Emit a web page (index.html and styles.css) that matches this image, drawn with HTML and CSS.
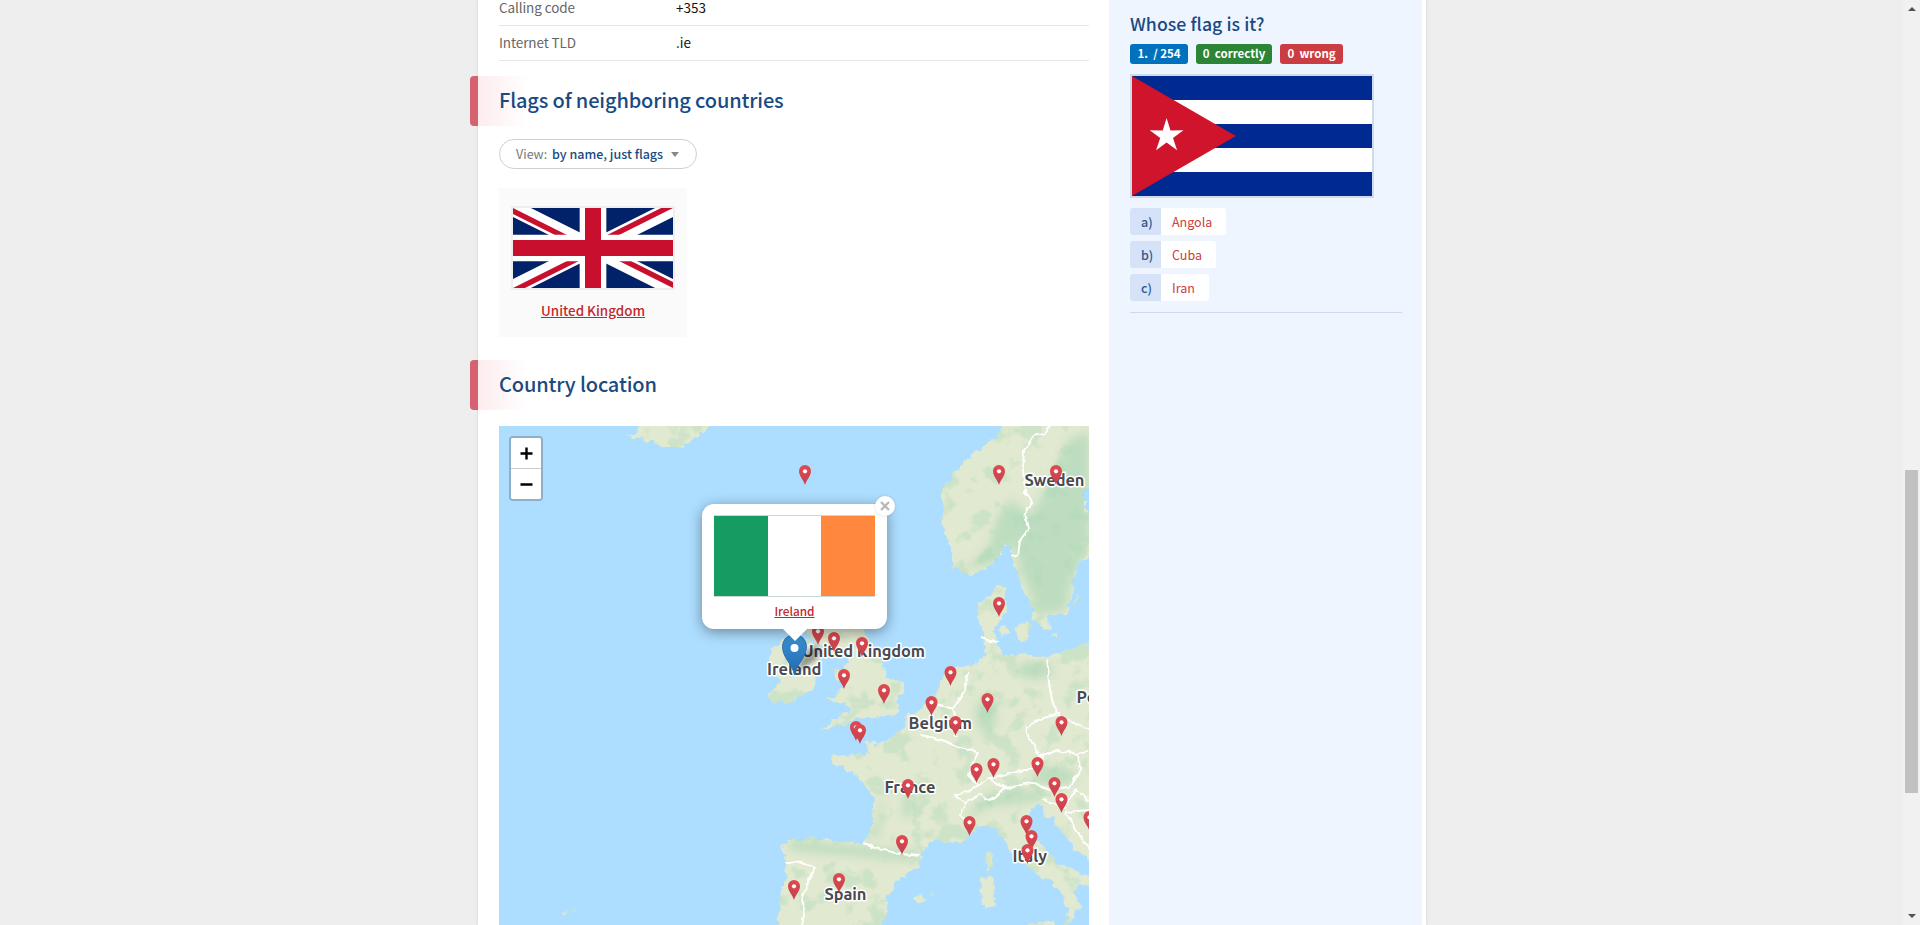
FILE: index.html
```html
<!DOCTYPE html>
<html lang="en">
<head>
<meta charset="utf-8">
<title>Flag of Ireland</title>
<link rel="stylesheet" href="styles.css">
</head>
<body>
<div class="page">
  <div class="content">
    <main class="main">
      <dl class="facts">
        <div class="fact"><dt>Calling code</dt><dd>+353</dd></div>
        <div class="fact"><dt>Internet TLD</dt><dd>.ie</dd></div>
      </dl>
      <h2 class="section-title first">Flags of neighboring countries</h2>
      <button class="view"><span class="view-label">View:</span><span class="view-value">by name, just flags</span><i class="caret"></i></button>
      <a class="flag-card" href="#">
        <svg class="uk" viewBox="0 0 60 30" width="160" height="80">
          <clipPath id="q"><path d="M30 15h30v15zv15H0zH0V0zV0h30z"/></clipPath>
          <path fill="#012169" d="M0 0h60v30H0z"/>
          <path d="M0 0l60 30M60 0L0 30" stroke="#fff" stroke-width="6"/>
          <path d="M0 0l60 30M60 0L0 30" clip-path="url(#q)" stroke="#c8102e" stroke-width="4"/>
          <path d="M30 0v30M0 15h60" stroke="#fff" stroke-width="10"/>
          <path d="M30 0v30M0 15h60" stroke="#c8102e" stroke-width="6"/>
        </svg>
        <span class="flag-name">United Kingdom</span>
      </a>
      <h2 class="section-title second">Country location</h2>
      <div class="map">
        <svg class="map-canvas" viewBox="499 426 590 499" width="590" height="499">
          <defs>
            <filter id="coast" x="0" y="0" width="1" height="1" color-interpolation-filters="sRGB">
              <feTurbulence type="fractalNoise" baseFrequency=".13" numOctaves="3" seed="4" result="n"/>
              <feDisplacementMap in="SourceGraphic" in2="n" scale="9" xChannelSelector="R" yChannelSelector="G" result="land"/>
              <feTurbulence type="fractalNoise" baseFrequency=".045" numOctaves="5" seed="11"/>
              <feColorMatrix values="0 0 0 0 .72  0 0 0 0 .865  0 0 0 0 .74  7 0 0 0 -3.75"/>
              <feComposite in2="land" operator="in" result="woods"/>
              <feComponentTransfer in="woods" result="softwoods"><feFuncA type="linear" slope=".5"/></feComponentTransfer>
              <feMerge><feMergeNode in="land"/><feMergeNode in="softwoods"/></feMerge>
            </filter>
            <filter id="rough" x="-.1" y="-.1" width="1.2" height="1.2" color-interpolation-filters="sRGB">
              <feTurbulence type="fractalNoise" baseFrequency=".12" numOctaves="2" seed="8"/>
              <feDisplacementMap in="SourceGraphic" scale="6" xChannelSelector="R" yChannelSelector="G"/>
            </filter>
            <filter id="soft" x="-.3" y="-.3" width="1.6" height="1.6"><feGaussianBlur stdDeviation="4"/></filter>
            <filter id="shade" x="-.3" y="-.3" width="1.6" height="1.6"><feGaussianBlur stdDeviation="2"/></filter>
            <linearGradient id="red" x2="0" y2="1"><stop stop-color="#e04a50"/><stop offset="1" stop-color="#c5404c"/></linearGradient>
            <linearGradient id="blue" x2="0" y2="1"><stop stop-color="#3c92d0"/><stop offset="1" stop-color="#2069b4"/></linearGradient>
            <g id="pin"><path d="M0 20C-1.200 15-6 11.500-6 6a6 6 0 0 1 12 0C6 11.500 1.200 15 0 20Z" fill="url(#red)"/><circle cy="6.300" r="2.100" fill="#fff"/></g>
            <clipPath id="landclip"><use href="#north"/><use href="#mainland"/></clipPath>
          </defs>
          <path fill="#addeff" d="M499 426h590v499H499z"/>
          <g filter="url(#coast)" fill="#e1e9d0">
            <path fill="none" d="M499 426h590v499H499z"/>
            <path d="M626 436L637 432 638 420H714L698 437 692 440 682 447 672 449 662 447 650 441 640 438Z"/>
            <path id="north" d="M1003 420L1002 428 992 441 977 450 965 463 953 475 942 487 943 500 942 515 945 533 950 552 953 567 967 575 983 572 997 560 1004 545 1010 545 1012 560 1020 580 1030 603 1035 620 1042 630 1050 629 1047 615 1067 613 1072 593 1077 563 1099 550V518L1084 511 1084 492 1099 480V420Z"/>
            <path id="mainland" d="M978 602L990 597 997 585 1005 587 1003 600 1008 610 1000 620 993 633 999 647 1007 657 1024 653 1034 660 1051 655 1068 650 1099 640V865L1089 859 1074 847 1061 831 1052 817 1045 817 1041 804 1029 810 1027 827 1041 844 1053 859 1066 867 1099 880V892L1078 884 1074 891 1081 905 1074 911 1070 926H1063L1069 912 1066 899 1051 882 1031 870 1012 854 1004 837 992 825 979 827 962 843 947 842 931 841 922 851 918 867 897 881 885 902 887 911 879 935H778L779 907 785 881 786 861 782 847 790 839 814 838 840 842 862 843 869 837 872 817 874 797 864 784 850 772 835 765 832 757 854 754 869 754 864 740 873 740 876 746 888 739 905 727 904 715 917 712 927 704 937 694 944 673 957 667 974 663 986 657 984 637 979 620Z"/>
            <path d="M801 625H862L866 634 874 650 884 668 888 679 904 682 904 693 894 702 899 708 896 715 874 717 853 719 840 726 822 730 837 719 851 710 844 704 826 699 844 688 833 672 850 664 846 652 829 653 818 643 806 634Z"/>
            <path d="M772 651L782 641 800 636 820 645 822 658 816 672 815 687 792 702 773 702 768 694 782 679 768 672Z"/>
            <path d="M985 855L992 852 993 867 987 871ZM982 879L994 876 996 904 986 910 980 892ZM914 899L922 895 925 900 919 904ZM1026 924L1055 920V930H1030ZM998 630L1006 625 1010 633 1002 636ZM1014 628L1028 621 1029 635 1021 641ZM1073 608L1078 593 1079 598ZM1052 634L1057 633 1056 637ZM930 893L935 894 933 896ZM560 914L567 911 565 914ZM571 911L577 910 575 912Z"/>
          </g>
          <g clip-path="url(#landclip)" fill="#a9d6b6" opacity=".62"><g filter="url(#soft)">
            <path d="M1089 432L1068 440 1060 462 1040 500 1030 515 1010 500 996 520 990 545 966 570 1000 560 1012 542 1022 575 1040 615 1066 610 1075 560 1089 545Z"/>
            <ellipse cx="1054" cy="776" rx="22" ry="9"/><ellipse cx="986" cy="715" rx="10" ry="18"/><ellipse cx="1035" cy="670" rx="18" ry="9"/><path d="M965 820L985 795 1040 790 1045 800 990 806ZM872 835L885 790 878 840ZM790 840L920 852 925 862 790 850Z"/>
            <ellipse cx="908" cy="805" rx="5" ry="14"/>
          </g></g>
          <g class="borders" filter="url(#rough)">
            <path d="M1049 426L1045 434 1033 436 1024 450 1023 470 1025 492 1032 502 1025 513 1028 530 1020 540 1018 556 1011 554M982 638L990 641 999 642M968 671L965 690 953 709 958 726 955 736M936 704L954 709M922 735L945 741 957 746 978 752 973 764 968 775 978 785 963 793 955 796M978 785L990 778 1010 773 1040 768 1042 756 1029 738 1025 727 1040 720 1056 714 1050 690 1046 659M1056 714L1080 726 1089 730M1042 756L1058 750 1078 755 1089 750M990 778L1005 788 1030 782 1050 790 1070 788 1080 770 1078 755M955 796L965 803 980 795 990 800 1005 788M965 803L960 815 970 822M1042 800L1065 808 1075 790 1089 800M1065 812L1089 810M1065 812L1089 850M864 843L880 849 900 854 921 856M786 862L805 863 814 868 807 884 802 900 805 910 802 925"/>
          </g>
          <g class="labels">
            <text x="1024.500" y="486" textLength="60">Sweden</text><text x="802" y="657" textLength="123">United Kingdom</text>
            <text x="767" y="675" textLength="54.500">Ireland</text><text x="908.500" y="728.500" textLength="63.500">Belgium</text>
            <text x="884.500" y="793" textLength="51">France</text><text x="1012.500" y="861.500" textLength="34.500">Italy</text>
            <text x="824.500" y="900" textLength="42">Spain</text><text x="1076.500" y="702.500">Po</text>
          </g>
          <use href="#pin" x="805" y="465"/><use href="#pin" x="999" y="465"/><use href="#pin" x="1056" y="465"/><use href="#pin" x="999" y="597"/>
          <use href="#pin" x="818" y="625"/><use href="#pin" x="834" y="632"/><use href="#pin" x="862" y="637"/><use href="#pin" x="844" y="669"/>
          <use href="#pin" x="884" y="684"/><use href="#pin" x="856" y="721"/><use href="#pin" x="860" y="724"/><use href="#pin" x="931.500" y="696"/>
          <use href="#pin" x="950.500" y="666"/><use href="#pin" x="955.500" y="716"/><use href="#pin" x="987.500" y="693"/><use href="#pin" x="1061.500" y="716"/>
          <use href="#pin" x="976.500" y="763"/><use href="#pin" x="993.500" y="758"/><use href="#pin" x="1037.500" y="757"/><use href="#pin" x="1054.500" y="777"/>
          <use href="#pin" x="1061.500" y="793"/><use href="#pin" x="908" y="779"/><use href="#pin" x="969.500" y="816"/><use href="#pin" x="1026.500" y="815"/>
          <use href="#pin" x="1031.500" y="830"/><use href="#pin" x="1027.500" y="844"/><use href="#pin" x="1089.500" y="811"/><use href="#pin" x="902" y="835"/>
          <use href="#pin" x="839" y="873"/><use href="#pin" x="794" y="880"/>
          <path d="M795 674L805 654Q814 642 820 648 823 656 812 662Z" fill="#000" opacity=".35" filter="url(#shade)"/>
          <path d="M794.500 675C793 665 782.500 658 782.500 646.500a12 12 0 0 1 24 0C806.500 658 796 665 794.500 675Z" fill="url(#blue)" stroke="#2a71ad" stroke-width="1"/>
          <circle cx="794.500" cy="648" r="4" fill="#fff"/>
        </svg>
        <div class="zoom-control"><button class="zoom"><svg width="13" height="13"><path d="M6.500 .5v12M.5 6.500h12" stroke="#000" stroke-width="2.400"/></svg></button><button class="zoom"><svg width="13" height="13"><path d="M.5 6.500h12" stroke="#000" stroke-width="2.400"/></svg></button></div>
        <div class="popup">
          <div class="ireland"><i class="green"></i><i class="white"></i><i class="orange"></i></div>
          <a class="popup-link" href="#">Ireland</a>
          <svg class="tip" width="28" height="14"><path d="M1 0h26L14 13z" fill="#fff"/></svg>
          <button class="close"><svg width="10" height="10"><path d="M1 1l8 8M9 1L1 9" stroke="#b8b8b8" stroke-width="2.300"/></svg></button>
        </div>
      </div>
    </main>
    <aside class="side">
      <h3 class="quiz-title">Whose flag is it?</h3>
      <div class="badges"><span class="badge total">1.&nbsp; / 254</span><span class="badge ok">0&nbsp; correctly</span><span class="badge bad">0&nbsp; wrong</span></div>
      <svg class="cuba" viewBox="0 0 240 120" width="240" height="120">
        <path fill="#fff" d="M0 0h240v120H0z"/><path fill="#002a8f" d="M0 0h240v24H0zM0 48h240v24H0zM0 96h240v24H0z"/>
        <path fill="#cf142b" d="M0 0l103.900 60L0 120z"/>
        <path fill="#fff" d="M34.600 42L38.500 54.400 51.500 54.300 41 61.900 45.100 74.300 34.600 66.600 24.100 74.300 28.200 61.900 17.700 54.300 30.700 54.400Z"/>
      </svg>
      <div class="answers">
        <a class="answer" href="#"><b class="key">a)</b><span class="word">Angola</span></a>
        <a class="answer" href="#"><b class="key">b)</b><span class="word">Cuba</span></a>
        <a class="answer" href="#"><b class="key">c)</b><span class="word">Iran</span></a>
      </div>
    </aside>
  </div>
  <div class="scrollbar"><i class="up"></i><i class="thumb"></i><i class="down"></i></div>
</div>
</body>
</html>
```
FILE: styles.css
```css
* { box-sizing: border-box; }
body { margin: 0; overflow: hidden; background: #eee; font-family: "Source Sans Pro", "Noto Sans CJK SC", sans-serif; font-size: 13.5px; color: #111; }
button { font: inherit; padding: 0; margin: 0; border: 0; background: #fff; color: inherit; }
h2, h3, dl, dd { margin: 0; }
svg { display: block; }
.page { display: flex; justify-content: space-between; height: 925px; padding-left: 478px; }
.content { display: flex; width: 948px; height: 925px; background: #fff; box-shadow: 0 0 3px rgba(0,0,0,.13); }
.main { width: 631px; flex: none; padding-left: 21px; display: flex; flex-direction: column; align-items: flex-start; }
.facts { width: 590px; margin-top: -9px; }
.fact { display: flex; height: 35px; line-height: 32px; border-bottom: 1px solid #e8e8e8; }
.fact dt { width: 177px; color: #666; letter-spacing: -.1px; }
.fact dd { color: #111; }
.section-title { height: 50px; width: 611px; margin-left: -29px; padding-left: 21px; line-height: 48px; font-size: 20px; letter-spacing: -.14px; font-weight: 500; color: #1b4a82; border-left: 8px solid #d66170; border-radius: 4px 0 0 4px; background: linear-gradient(90deg, #fdecee, #fff 50px); }
.first { margin-top: 15px; }
.second { margin-top: 23px; }
.view { display: flex; align-items: center; width: 198px; height: 30px; margin-top: 13px; padding-left: 16px; border: 1px solid #d0d0d0; border-radius: 15px; font-size: 12.500px; line-height: 28px; white-space: nowrap; }
.view-label { width: 36px; text-align: left; color: #777; }
.view-value { color: #1b4a82; font-weight: 500; }
.caret { margin-left: 8px; border: 4px solid transparent; border-top: 5px solid #888; border-bottom: 0; }
.flag-card { display: flex; flex-direction: column; align-items: center; width: 188px; height: 149px; margin-top: 19px; padding-top: 18px; background: #fafafa; text-decoration: none; }
.uk { box-sizing: content-box; border: 2px solid #eee; }
.flag-name { margin-top: 10px; line-height: 20px; font-size: 13.400px; font-weight: 500; color: #c3282d; text-decoration: underline; }
.map { position: relative; width: 590px; height: 499px; margin-top: 16px; overflow: hidden; }
.borders { fill: none; stroke: #fff; stroke-width: 1.900; stroke-linejoin: round; }
.labels { font: bold 16.500px Ubuntu, "Noto Sans", sans-serif; fill: #4a4a4f; stroke: #fff; stroke-width: 3px; stroke-linejoin: round; paint-order: stroke; }
.zoom-control { position: absolute; left: 10px; top: 10px; width: 34px; height: 65px; border: 2px solid #8fafc8; border-radius: 4px; background: #fff; overflow: hidden; }
.zoom { display: flex; align-items: center; justify-content: center; width: 30px; height: 31px; border-bottom: 1px solid #ccc; }
.zoom + .zoom { height: 30px; border: 0; }
.popup { position: absolute; left: 203px; top: 78px; width: 185px; height: 125px; padding: 11px 12px; border-radius: 12px; background: #fff; box-shadow: 0 3px 14px rgba(0,0,0,.4); text-align: center; }
.ireland { display: flex; width: 161px; height: 82px; border: 1px solid #ccdad8; border-width: 1px 0; }
.ireland i { flex: 1; }
.green { background: #169b62; }
.orange { background: #ff883e; }
.popup-link { display: block; margin-top: 4px; line-height: 20px; font-size: 11.800px; font-weight: 500; color: #c3282d; text-decoration: underline; }
.tip { position: absolute; left: 79px; top: 124px; }
.close { position: absolute; right: -8px; top: -8px; width: 20px; height: 20px; border-radius: 50%; display: flex; align-items: center; justify-content: center; box-shadow: 0 0 3px rgba(0,0,0,.15); }
.side { width: 313px; height: 925px; padding: 10px 20px 0 21px; background: #eff5ff; }
.quiz-title { height: 26px; line-height: 26px; font-size: 17.700px; letter-spacing: .05px; font-weight: 500; color: #1b4a82; }
.badges { display: flex; gap: 8px; margin-top: 8px; }
.badge { height: 20px; line-height: 19px; border-radius: 3px; font-size: 11.500px; font-weight: 700; color: #fff; text-align: center; white-space: nowrap; }
.total { width: 58px; background: #0071bc; }
.ok { width: 76px; background: #2c8437; }
.bad { width: 63px; background: #ca3d42; }
.cuba { box-sizing: content-box; margin-top: 10px; border: 2px solid #cddaec; }
.answers { display: flex; flex-direction: column; gap: 6px; width: 272px; margin-top: 10px; padding-bottom: 11px; border-bottom: 1px solid #cddaec; }
.answer { display: flex; height: 27px; line-height: 27px; font-size: 12.500px; text-decoration: none; }
.key { width: 31px; padding-left: 11px; border-radius: 3px 0 0 3px; background: #d6e2f7; color: #30598d; font-weight: 500; }
.word { padding: 0 14px 0 11px; border-radius: 0 3px 3px 0; background: #fff; color: #ca3d42; }
.scrollbar { display: flex; flex-direction: column; align-items: center; width: 17px; background: #f1f1f1; }
.up { margin-top: 7px; border: 4px solid transparent; border-bottom: 4px solid #505050; border-top: 0; }
.thumb { width: 13px; height: 323px; margin-top: 459px; background: #c1c1c1; }
.down { margin-top: 121px; border: 4px solid transparent; border-top: 4px solid #505050; border-bottom: 0; }
```
